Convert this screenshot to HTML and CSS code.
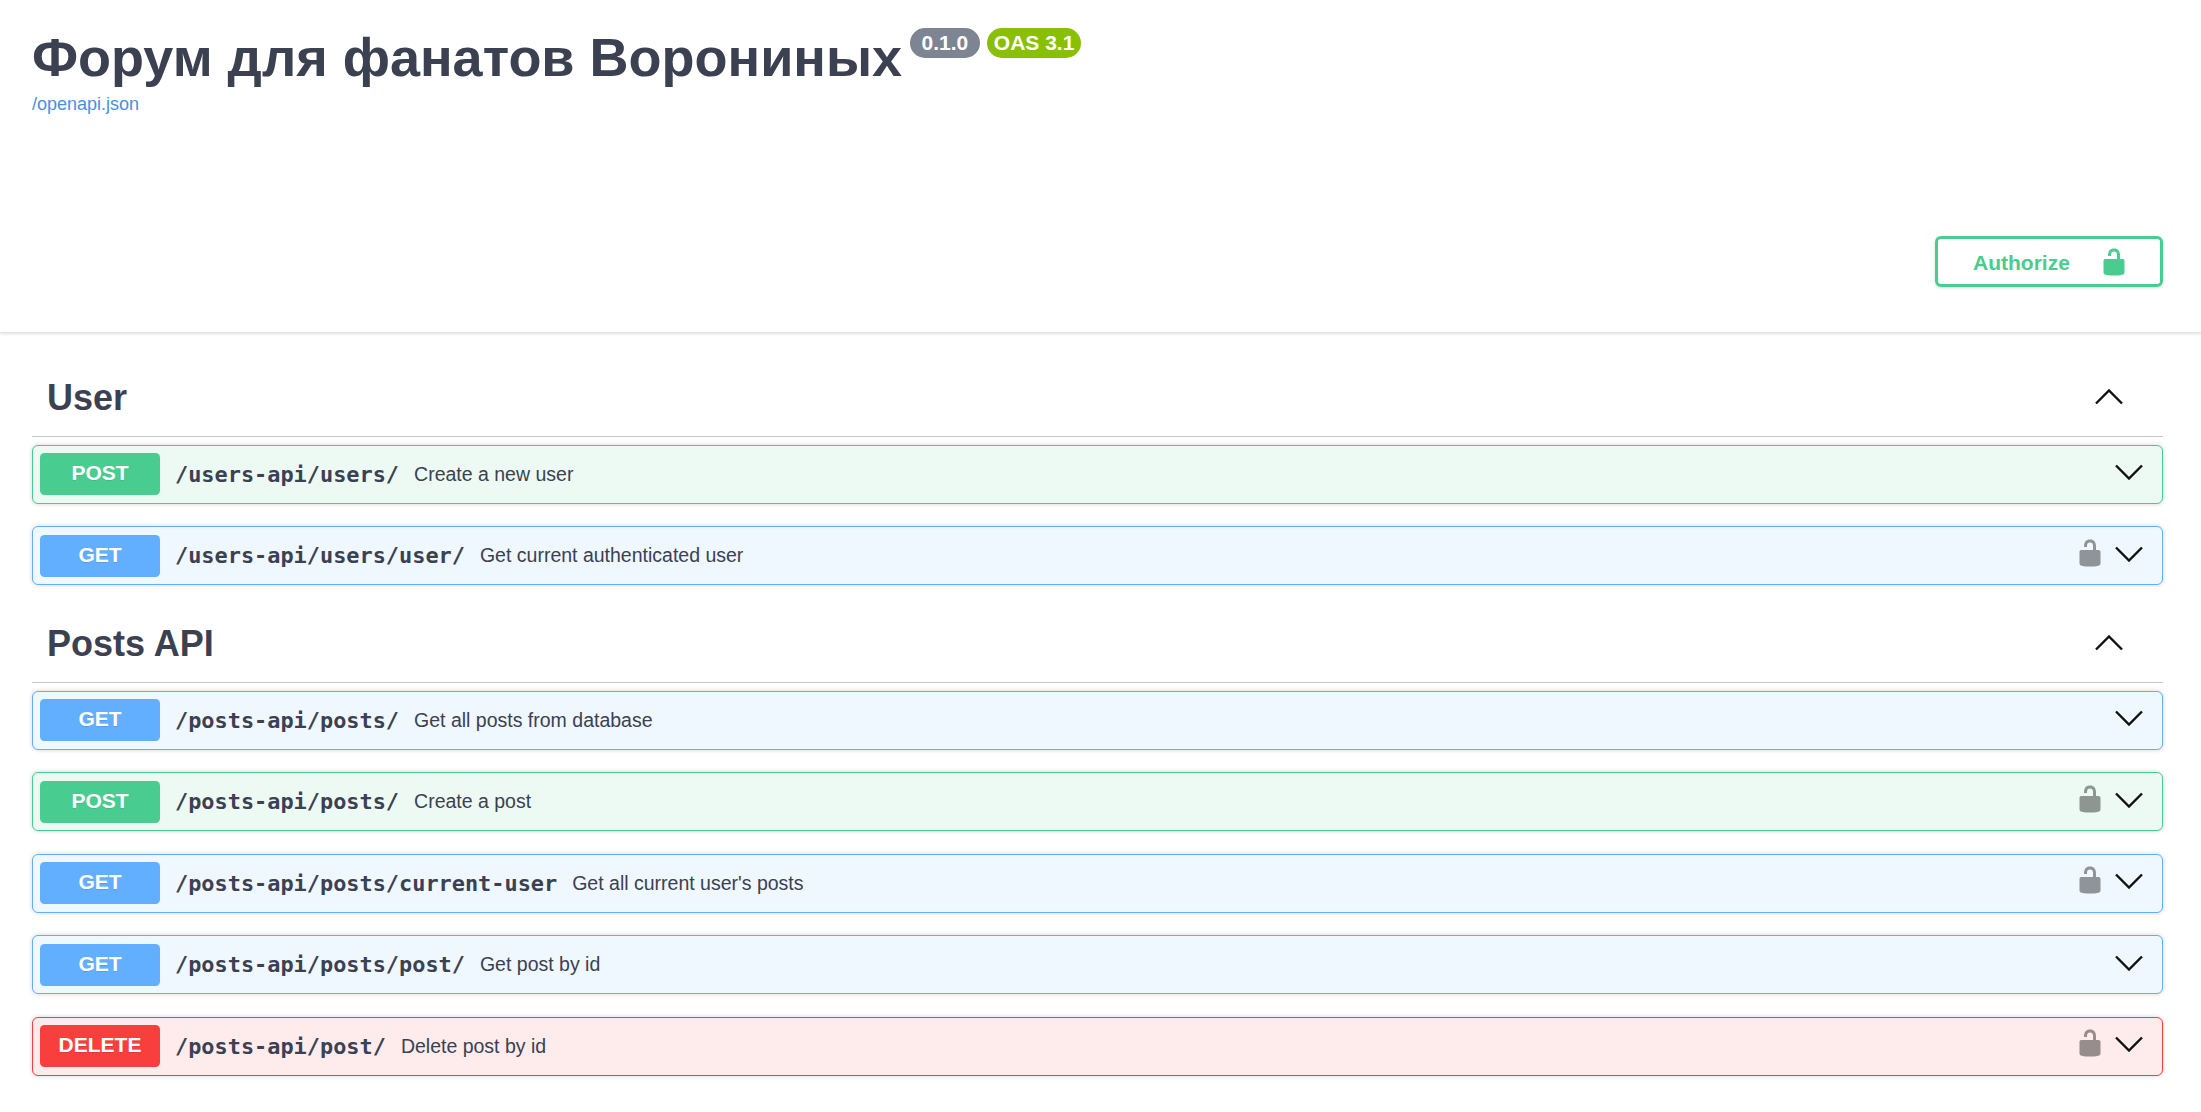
FILE: index.html
```html
<!DOCTYPE html>
<html lang="ru">
<head>
<meta charset="utf-8">
<title>Форум для фанатов Ворониных</title>
<link rel="stylesheet" href="styles.css">
</head>
<body>
<svg class="defs" aria-hidden="true">
  <symbol id="unlocked" viewBox="0 0 20 20"><path d="M15.8 8H14V5.6C14 2.703 12.665 1 10 1 7.334 1 6 2.703 6 5.6V6h2v-.801C8 3.754 8.797 3 10 3c1.203 0 2 .754 2 2.199V8H4c-.553 0-1 .646-1 1.199V17c0 .549.428 1.139.951 1.307l1.197.387C5.672 18.861 6.55 19 7.1 19h5.8c.549 0 1.428-.139 1.951-.307l1.196-.387c.524-.167.953-.757.953-1.306V9.199C17 8.646 16.352 8 15.8 8z"/></symbol>
  <symbol id="arrow-down" viewBox="0 0 28 16"><path d="M1 1.5 14 14.5 27 1.5" fill="none" stroke="currentColor" stroke-width="2.4"/></symbol>
  <symbol id="arrow-up" viewBox="0 0 28 16"><path d="M1 14.5 14 1.5 27 14.5" fill="none" stroke="currentColor" stroke-width="2.4"/></symbol>
</svg>

<header class="top">
  <div class="info">
    <div class="title-row">
      <h1 class="title">Форум для фанатов Ворониных</h1>
      <span class="badge badge-version">0.1.0</span>
      <span class="badge badge-oas">OAS 3.1</span>
    </div>
    <a class="spec-link" href="#">/openapi.json</a>
  </div>
  <div class="auth-row">
    <button class="authorize" type="button">
      <span class="auth-label">Authorize</span>
      <svg class="auth-lock"><use href="#unlocked"/></svg>
    </button>
  </div>
</header>

<main class="content">
  <section class="tag-section">
    <div class="tag-head">
      <h2 class="tag-name">User</h2>
      <svg class="tag-arrow"><use href="#arrow-up"/></svg>
    </div>
    <div class="op op-post">
      <span class="method">POST</span>
      <span class="path">/users-api/users/</span>
      <span class="desc">Create a new user</span>
      <svg class="op-arrow"><use href="#arrow-down"/></svg>
    </div>
    <div class="op op-get">
      <span class="method">GET</span>
      <span class="path">/users-api/users/user/</span>
      <span class="desc">Get current authenticated user</span>
      <svg class="op-lock"><use href="#unlocked"/></svg>
      <svg class="op-arrow"><use href="#arrow-down"/></svg>
    </div>
  </section>

  <section class="tag-section">
    <div class="tag-head">
      <h2 class="tag-name">Posts API</h2>
      <svg class="tag-arrow"><use href="#arrow-up"/></svg>
    </div>
    <div class="op op-get">
      <span class="method">GET</span>
      <span class="path">/posts-api/posts/</span>
      <span class="desc">Get all posts from database</span>
      <svg class="op-arrow"><use href="#arrow-down"/></svg>
    </div>
    <div class="op op-post">
      <span class="method">POST</span>
      <span class="path">/posts-api/posts/</span>
      <span class="desc">Create a post</span>
      <svg class="op-lock"><use href="#unlocked"/></svg>
      <svg class="op-arrow"><use href="#arrow-down"/></svg>
    </div>
    <div class="op op-get">
      <span class="method">GET</span>
      <span class="path">/posts-api/posts/current-user</span>
      <span class="desc">Get all current user's posts</span>
      <svg class="op-lock"><use href="#unlocked"/></svg>
      <svg class="op-arrow"><use href="#arrow-down"/></svg>
    </div>
    <div class="op op-get">
      <span class="method">GET</span>
      <span class="path">/posts-api/posts/post/</span>
      <span class="desc">Get post by id</span>
      <svg class="op-arrow"><use href="#arrow-down"/></svg>
    </div>
    <div class="op op-delete">
      <span class="method">DELETE</span>
      <span class="path">/posts-api/post/</span>
      <span class="desc">Delete post by id</span>
      <svg class="op-lock"><use href="#unlocked"/></svg>
      <svg class="op-arrow"><use href="#arrow-down"/></svg>
    </div>
  </section>
</main>
</body>
</html>
```

FILE: styles.css
```css
* { box-sizing: border-box; }

html, body {
  margin: 0;
  padding: 0;
  background: #fff;
  color: #3b4151;
  font-family: "Liberation Sans", Arial, sans-serif;
}

.defs { display: none; }

.top {
  height: 333px;
  padding: 28px 38px 0 32px;
  background: #fff;
  border-bottom: 1px solid #e3e3e3;
  box-shadow: 0 1px 3px rgba(0, 0, 0, .12);
}

.title-row {
  display: flex;
  align-items: flex-start;
  gap: 7px;
}

.title {
  margin: 0 1px 0 0;
  font-size: 54px;
  font-weight: 700;
  line-height: 58px;
  color: #3b4151;
}

.badge {
  display: block;
  height: 30px;
  padding: 0 11.5px;
  border-radius: 15px;
  color: #fff;
  font-size: 21px;
  font-weight: 700;
  line-height: 30px;
}

.badge-version { background: #7d8492; }
.badge-oas { background: #89bf04; padding: 0 7px; }

.spec-link {
  display: block;
  margin-top: 6px;
  color: #4990e2;
  font-size: 18px;
  line-height: 24px;
  text-decoration: none;
}

.auth-row {
  display: flex;
  justify-content: flex-end;
  margin-top: 120px;
}

.authorize {
  display: flex;
  align-items: center;
  width: 228px;
  height: 51px;
  padding: 0 0 0 35px;
  border: 3px solid #49cc90;
  border-radius: 6px;
  background: transparent;
  box-shadow: 0 1px 3px rgba(0, 0, 0, .15);
  color: #49cc90;
  font-family: "Liberation Sans", Arial, sans-serif;
  font-size: 21px;
  font-weight: 700;
}

.auth-label {
  position: relative;
  top: 1px;
}

.auth-lock {
  width: 30px;
  height: 30px;
  margin-left: 29px;
  fill: #49cc90;
}

.content {
  padding: 0 38px 0 32px;
}

.tag-head {
  display: flex;
  align-items: center;
  justify-content: space-between;
  height: 75px;
  padding: 0 40px 4px 15px;
  margin-bottom: 7.9px;
  border-bottom: 1px solid rgba(59, 65, 81, .3);
}

.tag-section:first-child { padding-top: 29px; }

.tag-name {
  margin: 2px 0 0;
  font-size: 36px;
  font-weight: 700;
  line-height: 40px;
  color: #3b4151;
}

.tag-arrow {
  width: 28px;
  height: 16px;
  color: #111;
}

.op {
  display: flex;
  align-items: center;
  height: 59px;
  margin-bottom: 22.5px;
  padding: 0 19px 0 7px;
  border: 1px solid;
  border-radius: 6px;
  box-shadow: 0 0 4px rgba(0, 0, 0, .19);
}

.op-post { background: #edfaf4; border-color: #49cc90; }
.op-get { background: #eff7ff; border-color: #61affe; }
.op-delete { background: #feebeb; border-color: #f93e3e; }

.op-post .method { background: #49cc90; }
.op-get .method { background: #61affe; }
.op-delete .method { background: #f93e3e; }

.method {
  flex: none;
  width: 120px;
  height: 42px;
  border-radius: 4.5px;
  color: #fff;
  font-size: 21px;
  font-weight: 700;
  line-height: 40px;
  text-align: center;
  text-shadow: 0 1px 0 rgba(0, 0, 0, .1);
}

.path {
  flex: none;
  margin-left: 15px;
  color: #3b4151;
  font-family: "DejaVu Sans Mono", "Liberation Mono", monospace;
  font-size: 21.9px;
  font-weight: 700;
}

.desc {
  flex: 1;
  margin-left: 15px;
  color: #3b4151;
  font-size: 19.5px;
}

.op-lock {
  flex: none;
  width: 30px;
  height: 30px;
  margin: -6px 10px 0 0;
  fill: rgba(0, 0, 0, .4);
}

.op-arrow {
  flex: none;
  width: 28px;
  height: 16px;
  margin-top: -4px;
  color: #111;
}
```
